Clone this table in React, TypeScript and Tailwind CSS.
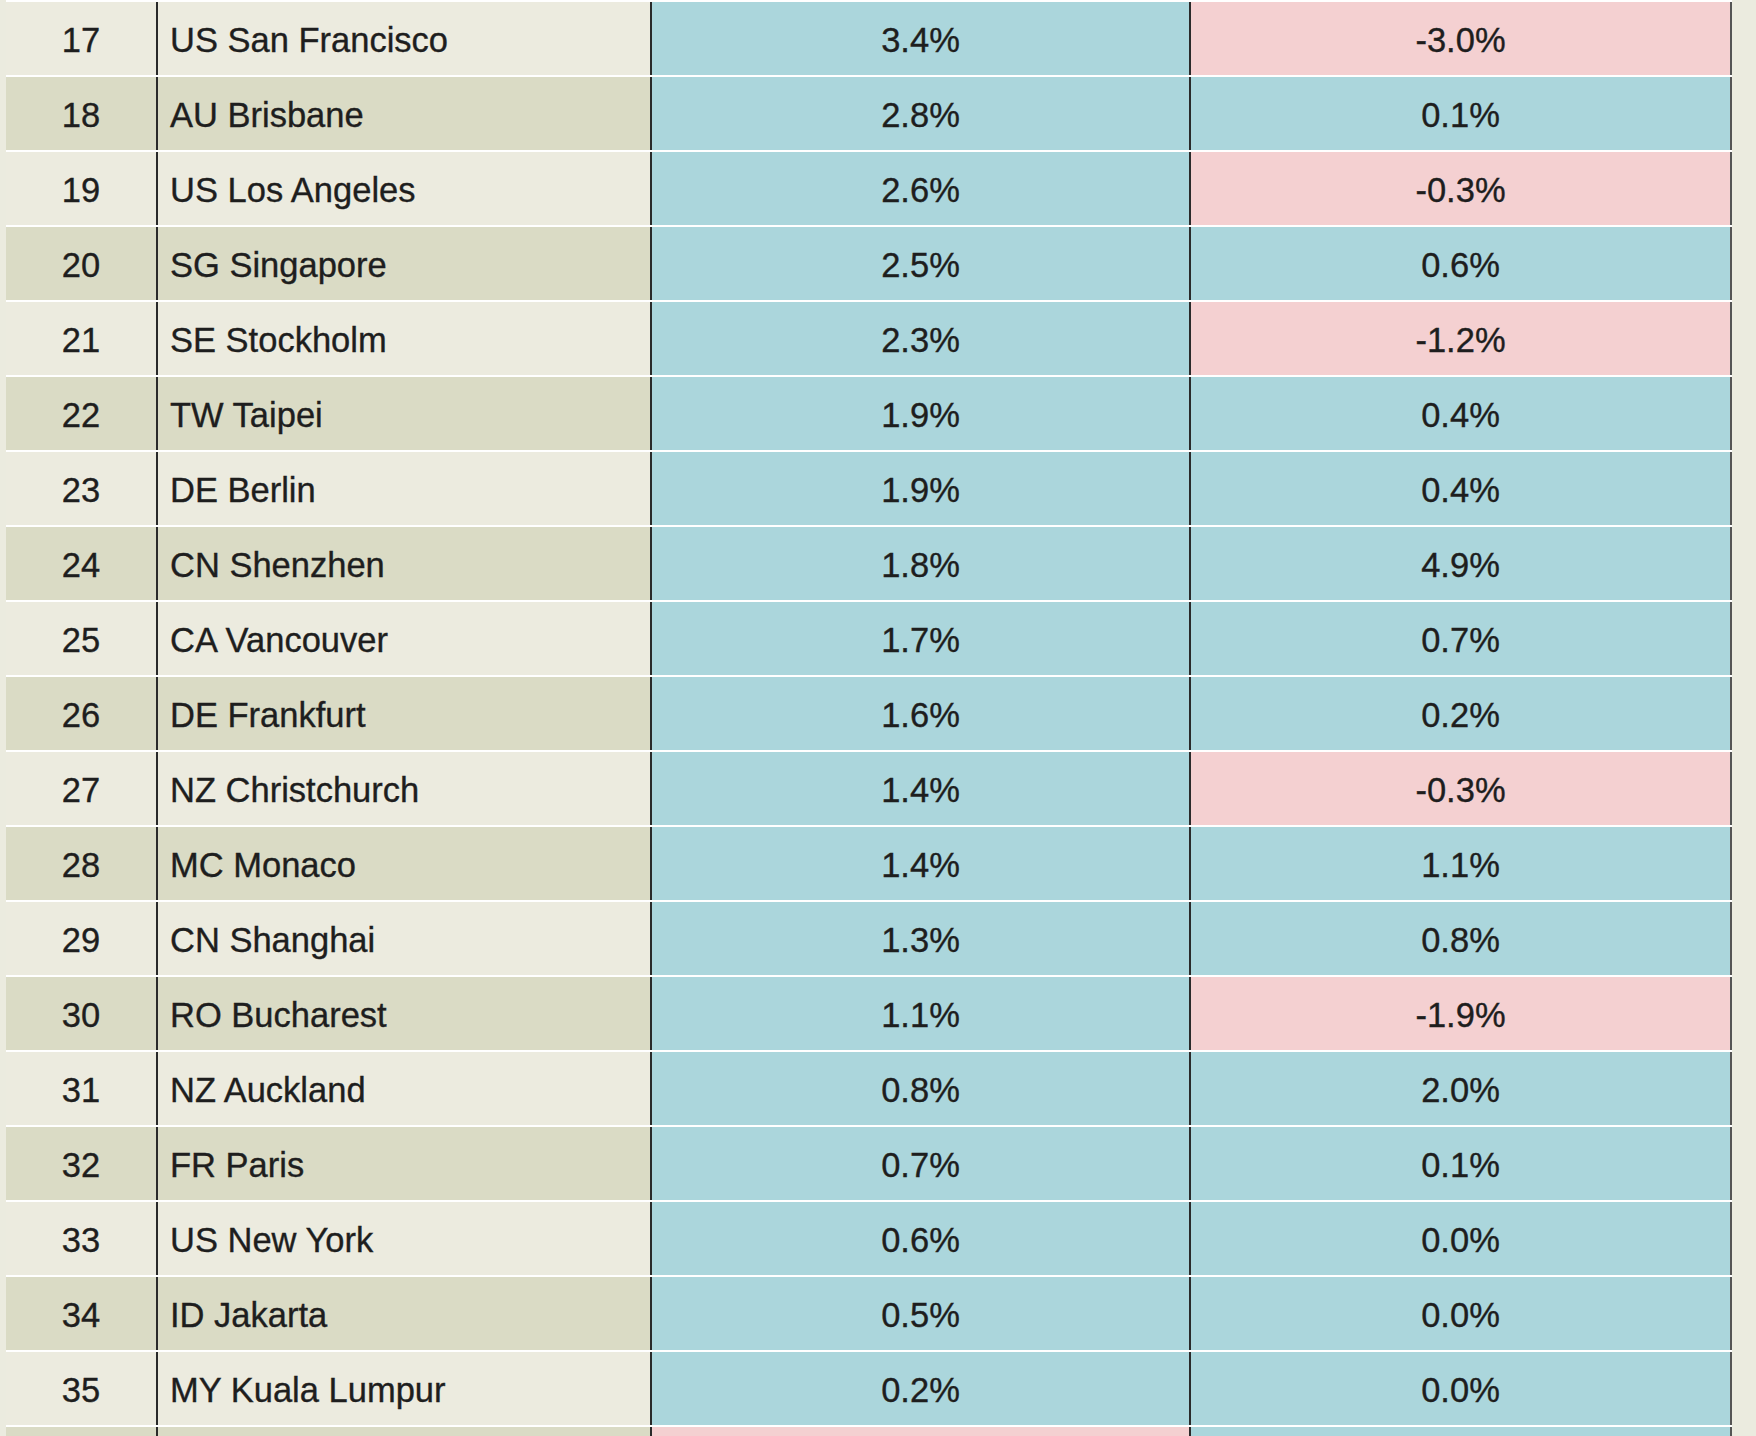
import React from "react";

type Row = { n: number; city: string; a: string; b: string };

const rows: Row[] = [
  { n: 17, city: "US San Francisco", a: "3.4%", b: "-3.0%" },
  { n: 18, city: "AU Brisbane", a: "2.8%", b: "0.1%" },
  { n: 19, city: "US Los Angeles", a: "2.6%", b: "-0.3%" },
  { n: 20, city: "SG Singapore", a: "2.5%", b: "0.6%" },
  { n: 21, city: "SE Stockholm", a: "2.3%", b: "-1.2%" },
  { n: 22, city: "TW Taipei", a: "1.9%", b: "0.4%" },
  { n: 23, city: "DE Berlin", a: "1.9%", b: "0.4%" },
  { n: 24, city: "CN Shenzhen", a: "1.8%", b: "4.9%" },
  { n: 25, city: "CA Vancouver", a: "1.7%", b: "0.7%" },
  { n: 26, city: "DE Frankfurt", a: "1.6%", b: "0.2%" },
  { n: 27, city: "NZ Christchurch", a: "1.4%", b: "-0.3%" },
  { n: 28, city: "MC Monaco", a: "1.4%", b: "1.1%" },
  { n: 29, city: "CN Shanghai", a: "1.3%", b: "0.8%" },
  { n: 30, city: "RO Bucharest", a: "1.1%", b: "-1.9%" },
  { n: 31, city: "NZ Auckland", a: "0.8%", b: "2.0%" },
  { n: 32, city: "FR Paris", a: "0.7%", b: "0.1%" },
  { n: 33, city: "US New York", a: "0.6%", b: "0.0%" },
  { n: 34, city: "ID Jakarta", a: "0.5%", b: "0.0%" },
  { n: 35, city: "MY Kuala Lumpur", a: "0.2%", b: "0.0%" },
];

function valueBg(v: string) {
  return v.startsWith("-") ? "bg-[#f4d0d1]" : "bg-[#abd6dc]";
}

export default function App() {
  return (
    <div
      className="h-[1436px] overflow-hidden bg-[#ebebdf] pl-[6px] text-[#1e1e1e]"
      style={{ fontFamily: '"Liberation Sans", Arial, sans-serif' }}
    >
      <div className="w-[1726px] border-t-2 border-white">
        {rows.map((r) => {
          const even = r.n % 2 === 0;
          const base = even ? "bg-[#dadbc5]" : "bg-[#ecebdf]";
          return (
            <div
              key={r.n}
              className="flex h-[75px] border-b-2 border-white text-[34.5px] [-webkit-text-stroke:0.35px_#1e1e1e]"
            >
              <div className={`flex w-[152px] items-center justify-center border-r-2 border-[#2a2a2a] pt-[5px] ${base}`}>
                {r.n}
              </div>
              <div className={`flex w-[494px] items-center border-r-2 border-[#2a2a2a] pl-3 pt-[5px] ${base}`}>
                {r.city}
              </div>
              <div className={`flex w-[539px] items-center justify-center border-r-2 border-[#2a2a2a] pt-[5px] ${valueBg(r.a)}`}>
                {r.a}
              </div>
              <div className={`flex w-[541px] items-center justify-center border-r-2 border-[#555555] pt-[5px] ${valueBg(r.b)}`}>
                {r.b}
              </div>
            </div>
          );
        })}
        <div className="flex h-[75px] border-b-2 border-white">
          <div className="w-[152px] border-r-2 border-[#2a2a2a] bg-[#dadbc5]" />
          <div className="w-[494px] border-r-2 border-[#2a2a2a] bg-[#dadbc5]" />
          <div className="w-[539px] border-r-2 border-[#2a2a2a] bg-[#f4d0d1]" />
          <div className="w-[541px] border-r-2 border-[#555555] bg-[#abd6dc]" />
        </div>
      </div>
    </div>
  );
}
